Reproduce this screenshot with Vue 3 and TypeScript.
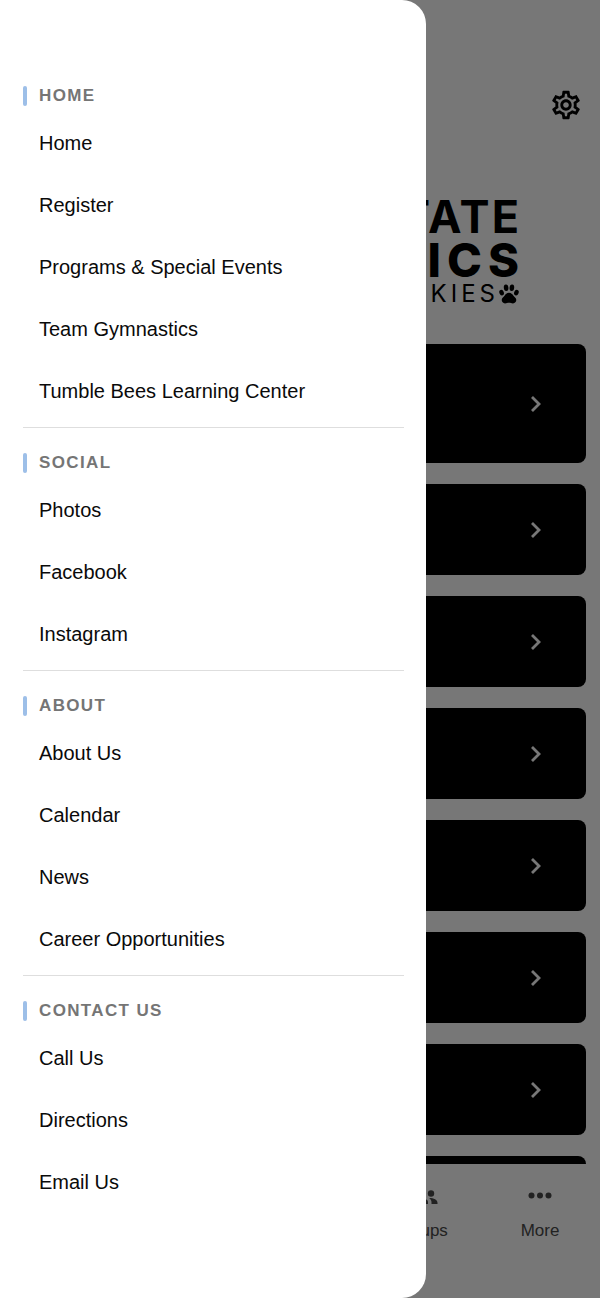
<script setup lang="ts">
interface MenuSection {
  title: string
  items: string[]
}

const sections: MenuSection[] = [
  {
    title: 'HOME',
    items: ['Home', 'Register', 'Programs & Special Events', 'Team Gymnastics', 'Tumble Bees Learning Center'],
  },
  { title: 'SOCIAL', items: ['Photos', 'Facebook', 'Instagram'] },
  { title: 'ABOUT', items: ['About Us', 'Calendar', 'News', 'Career Opportunities'] },
  { title: 'CONTACT US', items: ['Call Us', 'Directions', 'Email Us'] },
]

const cards: number[] = [1, 2, 3, 4, 5, 6, 7, 8]
</script>

<template>
  <div class="screen">
    <main class="page">
      <header class="topbar">
        <button class="icon-button" type="button" aria-label="Settings">
          <svg class="gear" viewBox="0 0 24 24" aria-hidden="true">
            <path
              d="M19.43 12.98c.04-.32.07-.64.07-.98 0-.34-.03-.66-.07-.98l2.11-1.65c.19-.15.24-.42.12-.64l-2-3.46c-.09-.16-.26-.25-.44-.25-.06 0-.12.01-.17.03l-2.49 1c-.52-.4-1.08-.73-1.69-.98l-.38-2.65C14.46 2.18 14.25 2 14 2h-4c-.25 0-.46.18-.49.42l-.38 2.65c-.61.25-1.17.59-1.69.98l-2.49-1c-.06-.02-.12-.03-.18-.03-.17 0-.34.09-.43.25l-2 3.46c-.13.22-.07.49.12.64l2.11 1.65c-.04.32-.07.65-.07.98 0 .33.03.66.07.98l-2.11 1.65c-.19.15-.24.42-.12.64l2 3.46c.09.16.26.25.44.25.06 0 .12-.01.17-.03l2.49-1c.52.4 1.08.73 1.69.98l.38 2.65c.03.24.24.42.49.42h4c.25 0 .46-.18.49-.42l.38-2.65c.61-.25 1.17-.59 1.69-.98l2.49 1c.06.02.12.03.18.03.17 0 .34-.09.43-.25l2-3.46c.12-.22.07-.49-.12-.64l-2.11-1.65zm-1.98-1.71c.04.31.05.52.05.73 0 .21-.02.43-.05.73l-.14 1.13.89.7 1.08.84-.7 1.21-1.27-.51-1.04-.42-.9.68c-.43.32-.84.56-1.25.73l-1.06.43-.16 1.13-.2 1.35h-1.4l-.19-1.35-.16-1.13-1.06-.43c-.43-.18-.83-.41-1.23-.71l-.91-.7-1.06.43-1.27.51-.7-1.21 1.08-.84.89-.7-.14-1.13c-.03-.31-.05-.54-.05-.74s.02-.43.05-.73l.14-1.13-.89-.7-1.08-.84.7-1.21 1.27.51 1.04.42.9-.68c.43-.32.84-.56 1.25-.73l1.06-.43.16-1.13.2-1.35h1.39l.19 1.35.16 1.13 1.06.43c.43.18.83.41 1.23.71l.91.7 1.06-.43 1.27-.51.7 1.21-1.07.85-.89.7.14 1.13zM12 8c-2.21 0-4 1.79-4 4s1.79 4 4 4 4-1.79 4-4-1.79-4-4-4zm0 6c-1.1 0-2-.9-2-2s.9-2 2-2 2 .9 2 2-.9 2-2 2z"
            />
          </svg>
        </button>
      </header>

      <div class="brand">
        <span class="brand-top">TATE</span>
        <span class="brand-mid">ICS</span>
        <span class="brand-low">
          KIES
          <svg class="paw" viewBox="0 0 20 20" aria-hidden="true">
            <ellipse cx="2.6" cy="8.6" rx="2.2" ry="2.9" transform="rotate(-22 2.6 8.6)" />
            <ellipse cx="7.1" cy="3.8" rx="2.3" ry="3.3" transform="rotate(-6 7.1 3.8)" />
            <ellipse cx="12.9" cy="3.8" rx="2.3" ry="3.3" transform="rotate(6 12.9 3.8)" />
            <ellipse cx="17.4" cy="8.6" rx="2.2" ry="2.9" transform="rotate(22 17.4 8.6)" />
            <path
              d="M10 8.8c-2.2 0-3.500 1.400-4.300 2.800-.8 1.300-3 2.200-3 4.500 0 1.900 1.400 3.300 3.300 3.300 1.500 0 2.600-.7 4-.7s2.500.7 4 .7c1.900 0 3.300-1.400 3.300-3.300 0-2.300-2.200-3.200-3-4.500-.8-1.400-2.100-2.800-4.300-2.800z"
            />
          </svg>
        </span>
      </div>

      <div class="cards">
        <button v-for="card in cards" :key="card" class="card" type="button" aria-label="Open">
          <svg class="chevron" viewBox="0 0 12 18" aria-hidden="true">
            <path d="M2 2l7 7-7 7" />
          </svg>
        </button>
      </div>

      <nav class="tabs" aria-label="Tabs">
        <a class="tab" href="#groups">
          <svg class="tab-icon" viewBox="0 0 36 24" aria-hidden="true">
            <circle cx="17" cy="8" r="4" />
            <path d="M9 20v-2c0-3 4-4 8-4s9 1 9 4v2z" />
            <circle cx="29" cy="9.500" r="3.200" />
            <path d="M27 14c5 0 8.500 1.800 8.500 4.800v1.200h-6v-1.500c0-2-.9-3.500-2.500-4.500z" />
          </svg>
          <span>Groups</span>
        </a>
        <a class="tab" href="#more">
          <svg class="tab-icon" viewBox="0 0 36 24" aria-hidden="true">
            <circle cx="9.500" cy="11.500" r="3" />
            <circle cx="18" cy="11.500" r="3" />
            <circle cx="26.500" cy="11.500" r="3" />
          </svg>
          <span>More</span>
        </a>
      </nav>
    </main>

    <div class="scrim"></div>

    <aside class="drawer">
      <nav aria-label="Menu">
        <section v-for="section in sections" :key="section.title" class="section">
          <h2 class="section-title">{{ section.title }}</h2>
          <ul class="links">
            <li v-for="item in section.items" :key="item">
              <a class="link" href="#">{{ item }}</a>
            </li>
          </ul>
        </section>
      </nav>
    </aside>
  </div>
</template>

<style>
body {
  margin: 0;
}
</style>

<style scoped>
.screen {
  position: relative;
  height: 100vh;
  overflow: hidden;
  font-family: 'Liberation Sans', Arial, sans-serif;
}

.page {
  display: flex;
  flex-direction: column;
  height: 100%;
  background: #fff;
}

.topbar {
  display: flex;
  justify-content: flex-end;
  padding: 88px 17px 0;
}

.icon-button {
  display: flex;
  padding: 0;
  border: 0;
  background: none;
}

.gear {
  width: 34px;
  height: 34px;
}

.brand {
  display: flex;
  flex-direction: column;
  align-items: flex-end;
  height: 222px;
  box-sizing: border-box;
  padding: 73px 81px 0 0;
  font-family: Inter, sans-serif;
  color: #000;
}

.brand-top {
  font-size: 45px;
  line-height: 44px;
  font-weight: 700;
  letter-spacing: 2px;
  margin-right: -2px;
}

.brand-mid {
  font-size: 47px;
  line-height: 42px;
  font-weight: 800;
  letter-spacing: 6px;
  margin-right: -6px;
}

.brand-low {
  display: flex;
  align-items: center;
  font-size: 24px;
  line-height: 26px;
  letter-spacing: 4px;
}

.paw {
  width: 20px;
  height: 20px;
  overflow: visible;
}

.cards {
  display: flex;
  flex: 1;
  flex-direction: column;
  gap: 21px;
  min-height: 0;
  overflow: hidden;
  padding: 0 14px;
}

.card {
  display: flex;
  flex: none;
  align-items: center;
  justify-content: flex-end;
  height: 91px;
  padding: 0 44px;
  border: 0;
  border-radius: 8px;
  background: #000;
}

.card:first-child {
  height: 119px;
}

.chevron {
  width: 12px;
  height: 18px;
  fill: none;
  stroke: #fff;
  stroke-width: 2.8;
}

.tabs {
  display: flex;
  justify-content: flex-end;
  height: 134px;
  box-sizing: border-box;
  padding-top: 20px;
}

.tab {
  display: flex;
  flex-direction: column;
  align-items: center;
  gap: 13px;
  width: 20%;
  font-size: 17px;
  line-height: 20px;
  color: #4a4a4a;
  text-decoration: none;
}

.tab-icon {
  width: 36px;
  height: 24px;
  fill: #4a4a4a;
}

.scrim {
  position: absolute;
  inset: 0;
  background: rgba(0, 0, 0, 0.535);
}

.drawer {
  position: absolute;
  top: 0;
  bottom: 0;
  left: 0;
  width: 71%;
  box-sizing: border-box;
  padding: 86px 22px 0 23px;
  border-radius: 0 24px 24px 0;
  background: #fff;
}

.section {
  padding-bottom: 5px;
}

.section + .section {
  padding-top: 25px;
  border-top: 1px solid #dedede;
}

.section-title {
  display: flex;
  align-items: center;
  gap: 12px;
  margin: 0;
  font-size: 17px;
  line-height: 20px;
  font-weight: 700;
  letter-spacing: 0.08em;
  color: #757575;
}

.section-title::before {
  content: '';
  width: 4px;
  height: 20px;
  border-radius: 2px;
  background: #9dbfe8;
}

.links {
  margin: 6px 0 0;
  padding: 0;
  list-style: none;
}

.link {
  display: block;
  padding: 0 16px;
  font-size: 20px;
  line-height: 62px;
  color: #0a0a0a;
  text-decoration: none;
}
</style>
